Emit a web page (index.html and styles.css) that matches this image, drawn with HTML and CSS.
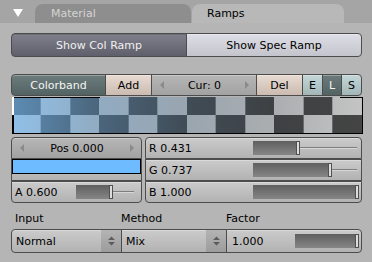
FILE: index.html
```html
<!DOCTYPE html>
<html>
<head>
<meta charset="utf-8">
<link rel="stylesheet" href="styles.css">
</head>
<body>
<div class="panel">
  <div class="header">
    <svg class="tri" width="10" height="8" viewBox="0 0 10 8"><path d="M0 0H10L5 8Z" fill="#ffffff"/></svg>
    <div class="tab tab-off">Material</div>
    <div class="tab tab-on">Ramps</div>
  </div>
  <div class="content">
    <div class="row show-row">
      <div class="btn pressed w-show">Show Col Ramp</div>
      <div class="btn light w-show">Show Spec Ramp</div>
    </div>
    <div class="row tool-row">
      <div class="btn teal w-colorband">Colorband</div>
      <div class="btn beige w-add">Add</div>
      <div class="btn num w-cur"><span class="arr-l"></span><span>Cur: 0</span><span class="arr-r"></span></div>
      <div class="btn beige w-del">Del</div>
      <div class="btn lteal w-e">E</div>
      <div class="btn teal w-l">L</div>
      <div class="btn lteal w-s">S</div>
    </div>
    <div class="band"><span class="mark"></span></div>
    <div class="cols">
      <div class="col col-left">
        <div class="btn num top pos"><span class="arr-l"></span><span>Pos 0.000</span><span class="arr-r"></span></div>
        <div class="btn plain swatch-btn"><div class="swatch"></div></div>
        <div class="btn plain slider bottom a-sl"><span>A 0.600</span><div class="track t-a"><div class="fill" style="width:60%"></div></div></div>
      </div>
      <div class="col col-right">
        <div class="btn plain slider top"><span>R 0.431</span><div class="track t-rgb"><div class="fill" style="width:43.1%"></div></div></div>
        <div class="btn plain slider"><span>G 0.737</span><div class="track t-rgb"><div class="fill" style="width:73.7%"></div></div></div>
        <div class="btn plain slider bottom"><span>B 1.000</span><div class="track t-rgb"><div class="fill" style="width:100%"></div></div></div>
      </div>
    </div>
    <div class="labels">
      <span class="lbl lbl-input">Input</span>
      <span class="lbl">Method</span>
      <span class="lbl">Factor</span>
    </div>
    <div class="row menu-row">
      <div class="btn plain menu w-normal"><span>Normal</span><span class="updown"><svg width="7" height="10" viewBox="0 0 7 10"><path d="M0 4L3.5 0.5L7 4Z M0 6L7 6L3.5 9.5Z" fill="#5c5c5c"/></svg></span></div>
      <div class="btn plain menu w-mix"><span>Mix</span><span class="updown"><svg width="7" height="10" viewBox="0 0 7 10"><path d="M0 4L3.5 0.5L7 4Z M0 6L7 6L3.5 9.5Z" fill="#5c5c5c"/></svg></span></div>
      <div class="btn plain slider w-factor"><span>1.000</span><div class="track t-f"><div class="fill" style="width:100%"></div></div></div>
    </div>
  </div>
</div>
</body>
</html>
```

FILE: styles.css
```css
html, body {
  margin: 0;
  padding: 0;
}
body {
  width: 372px;
  height: 262px;
  overflow: hidden;
  background: #b5b5b5;
  font-family: "DejaVu Sans", "Liberation Sans", sans-serif;
  font-size: 11px;
  color: #000;
}
.panel {
  width: 372px;
  height: 262px;
  background: #b5b5b5;
}
.header {
  height: 23px;
  background: #a5a5a5;
  display: flex;
  align-items: flex-end;
  padding-left: 13px;
}
.tri {
  align-self: flex-start;
  margin-top: 9px;
  margin-right: 12px;
}
.tab {
  height: 19px;
  box-sizing: border-box;
  border-radius: 8px 8px 0 0;
  padding-left: 16px;
  display: flex;
  align-items: center;
}
.tab-off {
  width: 156px;
  background: #8e8e8e;
  color: #d4d4d4;
  margin-right: 1px;
}
.tab-on {
  width: 152px;
  background: #b8b8b8;
  color: #000;
  padding-left: 15px;
}
.content {
  padding: 10px 10px 0 11px;
  width: 351px;
}
.row {
  display: flex;
}
.btn {
  box-sizing: border-box;
  border: 1px solid #4c4c4c;
  display: flex;
  align-items: center;
  justify-content: center;
  height: 100%;
  white-space: nowrap;
  box-shadow: inset 0 1px rgba(255, 255, 255, 0.3);
}
.row > .btn + .btn {
  margin-left: -1px;
}
.row > .btn:first-child {
  border-radius: 4px 0 0 4px;
}
.row > .btn:last-child {
  border-radius: 0 4px 4px 0;
}
.show-row {
  height: 24px;
}
.w-show { width: 176px; }
.pressed {
  background: linear-gradient(#80808d, #5f5f6b);
  color: #f0f0f0;
  box-shadow: inset 0 1px rgba(0, 0, 0, 0.15);
}
.light {
  background: linear-gradient(#dedee6, #c4c4cc);
}
.tool-row {
  height: 22px;
  margin-top: 17px;
}
.w-colorband { width: 95px; }
.w-add { width: 47px; }
.w-cur { width: 106px; }
.w-del { width: 47px; }
.w-e { width: 21px; }
.w-l { width: 20px; }
.w-s { width: 21px; }
.teal {
  background: linear-gradient(#6c7c7c, #536363);
  color: #f4f4f4;
}
.lteal {
  background: linear-gradient(#c4d6d8, #a2b6b8);
}
.beige {
  background: linear-gradient(#e8dbd2, #cbbbb1);
}
.num {
  background: linear-gradient(#b6b6b6, #a2a2a2);
  justify-content: space-between;
  padding: 0 7px 0 8px;
}
.arr-l, .arr-r {
  width: 0;
  height: 0;
  border-top: 4px solid transparent;
  border-bottom: 4px solid transparent;
}
.arr-l { border-right: 4px solid #8a8a8a; }
.arr-r { border-left: 4px solid #8a8a8a; }
.band {
  position: relative;
  box-sizing: border-box;
  width: 351px;
  height: 37px;
  margin: 1px -1px 0 1px;
  border-right: 1px solid #000;
  border-bottom: 1px solid #000;
  background:
    linear-gradient(to right,
      rgba(110, 188, 255, 0.6) 0%,
      rgba(83, 141, 191, 0.45) 25%,
      rgba(55, 94, 128, 0.3) 50%,
      rgba(28, 47, 64, 0.15) 75%,
      rgba(0, 0, 0, 0) 100%),
    conic-gradient(#c4c4c4 0 25%, #444444 0 50%, #c4c4c4 0 75%, #444444 0) 0 0 / 58.333px 36px;
}
.band::before {
  content: "";
  position: absolute;
  left: 2px;
  top: 0;
  width: 86px;
  height: 1px;
  background: #000;
}
.band::after {
  content: "";
  position: absolute;
  right: 0;
  top: 0;
  width: 22px;
  height: 1px;
  background: #000;
}
.mark {
  position: absolute;
  left: 0;
  top: 0;
  width: 2px;
  height: 36px;
  background: linear-gradient(#ffffff 0 50%, #000000 50% 100%);
}
.cols {
  display: flex;
  gap: 3px;
  margin-top: 3px;
  height: 66px;
}
.col {
  display: flex;
  flex-direction: column;
}
.col-left { width: 131px; }
.col-right { width: 217px; }
.col > .btn {
  height: 22px;
  flex: 0 0 22px;
}
.col > .top { border-radius: 4px 4px 0 0; }
.col > .bottom { border-radius: 0 0 4px 4px; }
.plain {
  background: linear-gradient(#cbcbcb, #b2b2b2);
}
.swatch-btn {
  align-items: flex-start;
  padding: 0;
  border-top: none;
}
.swatch {
  box-sizing: border-box;
  width: 100%;
  height: 15px;
  background: #6ebcff;
  border: 1px solid #000;
  margin: 0 -1px;
}
.slider {
  justify-content: flex-start;
  padding-left: 3px;
}
.track {
  position: relative;
  margin-left: auto;
  height: 14px;
  background: linear-gradient(transparent 6px, #7e7e7e 6px 7px, #d6d6d6 7px 8px, transparent 8px);
}
.t-rgb { width: 104px; margin-right: 4px; }
.t-a { width: 58px; margin-right: 7px; }
.t-f { width: 62px; margin-right: 4px; }
.fill {
  position: relative;
  height: 100%;
  background: linear-gradient(#5f5f5f, #868686);
}
.fill::after {
  content: "";
  position: absolute;
  right: -2px;
  top: 0;
  width: 2px;
  height: 12px;
  background: #dcdcdc;
  border: 1px solid #505050;
}
.labels {
  display: grid;
  grid-template-columns: 110px 105px 1fr;
  height: 17px;
  margin-top: 7px;
  align-items: center;
}
.lbl-input { padding-left: 4px; }
.menu-row {
  height: 24px;
  margin-top: 2px;
}
.w-normal { width: 111px; }
.w-mix { width: 106px; }
.w-factor { width: 136px; padding-left: 5px; }
.menu {
  justify-content: flex-start;
  padding-left: 4px;
}
.updown {
  margin-left: auto;
  width: 20px;
  height: 100%;
  background: linear-gradient(#b4b4b4, #9c9c9c);
  display: flex;
  align-items: center;
  justify-content: center;
}
```
